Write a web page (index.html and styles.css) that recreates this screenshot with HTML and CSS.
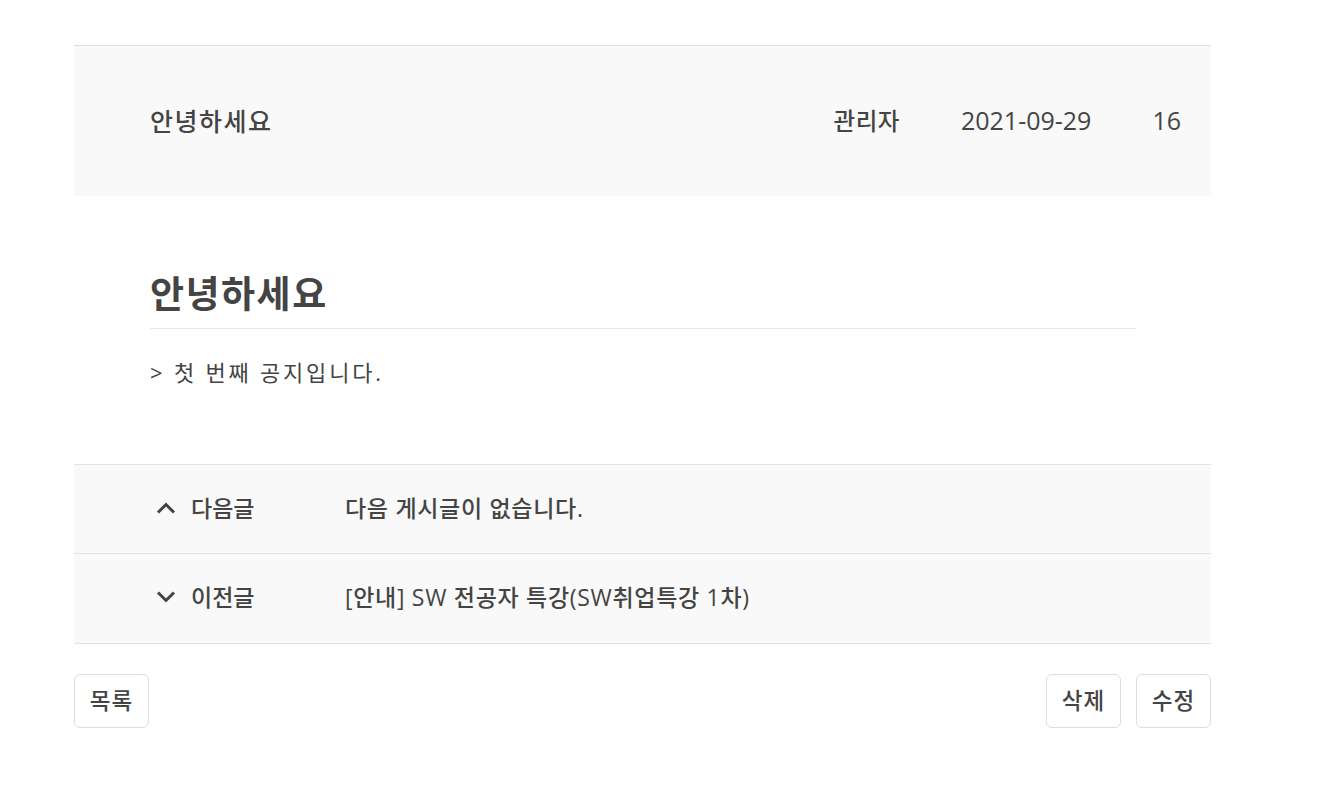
FILE: index.html
```html
<!DOCTYPE html>
<html lang="ko">
<head>
<meta charset="utf-8">
<title>공지사항</title>
<link rel="stylesheet" href="styles.css">
</head>
<body>
<div class="page">
  <div class="view-head">
    <div class="head-title">안녕하세요</div>
    <div class="head-meta">
      <span class="writer">관리자</span>
      <span class="date">2021-09-29</span>
      <span class="hits">16</span>
    </div>
  </div>
  <div class="view-body">
    <h2 class="body-title">안녕하세요</h2>
    <p class="body-text">&gt; 첫 번째 공지입니다.</p>
  </div>
  <div class="nav-list">
    <div class="nav-row">
      <div class="nav-label">
        <svg class="chev" width="20" height="12" viewBox="0 0 20 12"><path d="M2 10.5 L10 2.5 L18 10.5" fill="none" stroke="#444" stroke-width="3"/></svg>
        <span>다음글</span>
      </div>
      <div class="nav-text">다음 게시글이 없습니다.</div>
    </div>
    <div class="nav-row">
      <div class="nav-label">
        <svg class="chev" width="20" height="12" viewBox="0 0 20 12"><path d="M2 1.5 L10 9.5 L18 1.5" fill="none" stroke="#444" stroke-width="3"/></svg>
        <span>이전글</span>
      </div>
      <div class="nav-text">[안내] SW 전공자 특강(SW취업특강 1차)</div>
    </div>
  </div>
  <div class="btn-bar">
    <button class="btn">목록</button>
    <div class="btn-group">
      <button class="btn">삭제</button>
      <button class="btn">수정</button>
    </div>
  </div>
</div>
</body>
</html>
```

FILE: styles.css
```css
* { box-sizing: border-box; }
html, body { margin: 0; padding: 0; background: #fff; }
body {
  font-family: "Open Sans", "Noto Sans CJK KR", sans-serif;
  color: #444;
}
.page {
  width: 1137px;
  margin-left: 74px;
  padding-top: 45px;
}
.view-head {
  border-top: 1px solid #ddd;
  background: #f9f9f9;
  height: 151px;
  display: flex;
  align-items: center;
  justify-content: space-between;
  padding: 0 30px 0 76px;
}
.head-title { font-size: 25px; font-weight: 500; letter-spacing: 1.5px; padding-bottom: 3px; }
.head-meta { display: flex; align-items: baseline; gap: 61px; font-weight: 500; padding-bottom: 3px; }
.writer { font-size: 23.5px; letter-spacing: 0.5px; }
.date, .hits { font-size: 25px; }
.view-body { padding: 74px 75px 75px 76px; }
.body-title {
  margin: 0;
  font-size: 37px;
  font-weight: 700;
  line-height: 1.3;
  letter-spacing: 1.5px;
  padding-bottom: 10px;
  border-bottom: 1px solid #e8e8e8;
}
.body-text { margin: 27px 0 0; font-size: 22px; line-height: 1.5; letter-spacing: 2.8px; }
.nav-list { border-top: 1px solid #e2e2e2; }
.nav-row {
  display: flex;
  align-items: center;
  height: 89px;
  background: #f9f9f9;
  border-bottom: 1px solid #e2e2e2;
  padding: 0 0 5px 82px;
  font-size: 23px;
  font-weight: 500;
}
.nav-row + .nav-row { height: 90px; }
.nav-label { display: flex; align-items: center; gap: 15px; width: 189px; }
.nav-text { letter-spacing: 0.7px; }
.chev { display: block; margin-top: 2px; }
.btn-bar { display: flex; justify-content: space-between; margin-top: 30px; }
.btn-group { display: flex; gap: 15px; }
.btn {
  font-family: inherit;
  color: #444;
  background: #fff;
  border: 1px solid #ddd;
  border-radius: 6px;
  width: 75px;
  height: 54px;
  font-size: 22.5px;
  font-weight: 500;
  letter-spacing: 1px;
  padding: 0 0 4px;
}
```
